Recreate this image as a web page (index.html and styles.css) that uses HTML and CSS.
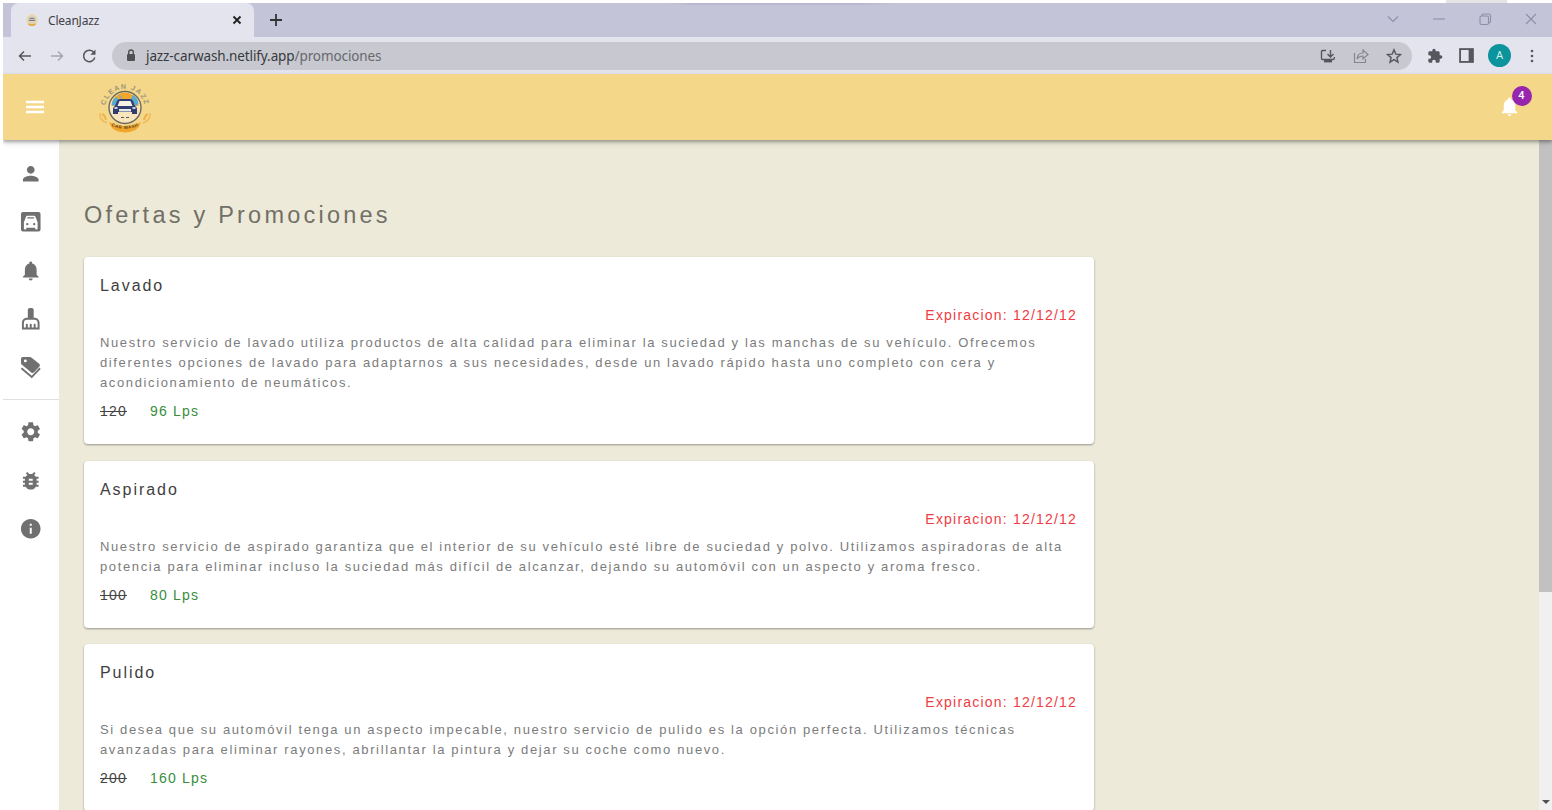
FILE: index.html
```html
<!DOCTYPE html>
<html lang="es">
<head>
<meta charset="utf-8">
<title>CleanJazz</title>
<link rel="stylesheet" href="styles.css">
</head>
<body>
<div class="window">
  <header class="tabstrip">
    <div class="tab">
      <svg class="favicon" viewBox="0 0 16 16"><circle cx="8" cy="8" r="6.5" fill="#ecd7a4"/><circle cx="8" cy="7.5" r="4.3" fill="#d9d3c2"/><path d="M5 6h6M4.5 8.5h7" stroke="#777b87" stroke-width="1.4"/><path d="M4 12.5q4 2.5 8 0" stroke="#e5a93f" stroke-width="2" fill="none"/></svg>
      <span class="tab-title">CleanJazz</span>
      <svg class="tab-close" viewBox="0 0 10 10"><path d="M1.5 1.5l7 7M8.5 1.5l-7 7" stroke="#222" stroke-width="1.9"/></svg>
    </div>
    <svg class="new-tab" viewBox="0 0 14 14"><path d="M7 1v12M1 7h12" stroke="#333" stroke-width="1.8"/></svg>
    <div class="window-buttons">
      <svg viewBox="0 0 14 14"><path d="M2 4.5l5 5 5-5"/></svg>
      <svg viewBox="0 0 14 14"><path d="M1 7h12"/></svg>
      <svg viewBox="0 0 14 14"><rect x="2" y="4" width="8.5" height="8.5" rx="1.5"/><path d="M4 4V3q0-1 1-1h5.500q2 0 2 2v5.500q0 1-1.500 1.500"/></svg>
      <svg viewBox="0 0 14 14"><path d="M2 2l10 10M12 2L2 12"/></svg>
    </div>
  </header>
  <div class="toolbar">
    <svg class="nav-icon" viewBox="0 0 16 16"><path d="M14 8H2.500M7 3.500L2.500 8 7 12.500" stroke="#55575c"/></svg>
    <svg class="nav-icon" viewBox="0 0 16 16"><path d="M2 8h11.500M9 3.500L13.500 8 9 12.500" stroke="#a5a6ae"/></svg>
    <svg class="nav-icon" viewBox="0 0 16 16"><path d="M13 4.700A5.700 5.700 0 1 0 13.800 9.500" stroke="#55575c"/><path d="M14.500 1.500v5.200H9.300z" fill="#55575c"/></svg>
    <div class="address">
      <svg class="lock" viewBox="0 0 10 13"><rect x="1" y="5" width="8" height="7" rx="1" fill="#4f5054"/><path d="M2.700 5V3.300a2.300 2.300 0 0 1 4.600 0V5" stroke="#4f5054" stroke-width="1.400" fill="none"/></svg>
      <span class="url">jazz-carwash.netlify.app<span class="path">/promociones</span></span>
      <div class="address-actions">
        <svg viewBox="0 0 16 16"><path d="M6 2.500H2.500Q1.500 2.500 1.500 3.500v7q0 1 1 1h10.500q1.300 0 1.300-1.300V9M10.500 2v6.500M7.500 6l3 3 3-3"/><path d="M4 13.200h8" stroke-width="2.400"/></svg>
        <svg class="share" viewBox="0 0 16 16"><path d="M1.500 5v9.500h11V11M4 11q.5-6 6-6V2l5 4.500-5 4.500V8q-4 0-6 3z"/></svg>
        <svg viewBox="0 0 16 16"><path d="M8 1.800l1.800 4.300 4.700.4-3.600 3.100 1.100 4.600L8 11.700l-4 2.500 1.100-4.600L1.500 6.500l4.700-.4z"/></svg>
      </div>
    </div>
    <svg class="ext" viewBox="0 0 24 24"><path d="M20.500 11H19V7c0-1.100-.9-2-2-2h-4V3.500C13 2.120 11.880 1 10.500 1S8 2.120 8 3.500V5H4c-1.100 0-2 .9-2 2v3.800h1.500c1.500 0 2.700 1.200 2.700 2.700s-1.200 2.700-2.700 2.700H2V20c0 1.100.9 2 2 2h3.800v-1.500c0-1.500 1.200-2.700 2.700-2.700s2.700 1.200 2.700 2.700V22H17c1.100 0 2-.9 2-2v-4h1.500c1.380 0 2.500-1.120 2.500-2.500S21.880 11 20.500 11z"/></svg>
    <svg class="panel" viewBox="0 0 14 14"><rect x="1" y="1" width="12" height="12" fill="none" stroke="#55575c" stroke-width="1.700"/><path d="M9 1h4v12H9z" fill="#55575c"/></svg>
    <span class="avatar">A</span>
    <svg class="dots" viewBox="0 0 4 16"><circle cx="2" cy="3" r="1.300"/><circle cx="2" cy="8" r="1.300"/><circle cx="2" cy="13" r="1.300"/></svg>
  </div>
  <div class="appbar">
    <svg class="menu" viewBox="0 0 24 24"><path d="M3 18.200h18v-2.400H3v2.400zm0-5h18v-2.400H3v2.400zm0-7.400v2.400h18V5.800H3z"/></svg>
    <svg class="logo" viewBox="0 0 56 56">
      <defs><path id="arc-top" d="M8 30A20 20 0 0 1 48 30"/><path id="arc-low" d="M14 46.500Q28 53.500 42 46.500"/></defs>
      <path d="M3 34q-1 7 7 10M53 34q1 7-7 10" fill="none" stroke="#efbc5e" stroke-width="1.500"/>
      <path d="M5 35q3 1 4 6M51 35q-3 1-4 6" fill="none" stroke="#efb24d" stroke-width="2"/>
      <path d="M12 43q3 10.500 16 10.500T44 43q-7 4-16 4t-16-4z" fill="#f2a62b"/>
      <circle cx="28" cy="28.500" r="16" fill="#f7e6bd" stroke="#6a6960" stroke-width="1.400"/>
      <path d="M14.500 27a13.500 13.500 0 0 1 27 0z" fill="#f1a62e"/>
      <path d="M14.500 26q1-6 4.500-8l3 3-4 6zM36 16q5 3 5.500 9l-3 2-5-6z" fill="#55abd0"/>
      <path d="M22 16l3 4" stroke="#6bb2bf" stroke-width="1.200"/>
      <path d="M20 22q1-2 3-2h10q2 0 3 2l2 5q2 1 2 3v5h-5v-2H21v2h-5v-5q0-2 2-3z" fill="#303d70"/>
      <path d="M22.500 22h11l2 5h-15z" fill="#f5f1e5"/><path d="M22 30h12v2.500H22z" fill="#e6e8e9"/><path d="M17.500 29h3M35.500 29h3" stroke="#fff" stroke-width="1.500"/>
      <path d="M24 38.500h3M29 38.500h3" stroke="#555" stroke-width="1.200"/>
      <text class="logo-top"><textPath href="#arc-top" startOffset="50%" text-anchor="middle">CLEAN JAZZ</textPath></text>
      <text class="logo-low"><textPath href="#arc-low" startOffset="50%" text-anchor="middle">CAR WASH</textPath></text>
    </svg>
    <div class="notify">
      <svg viewBox="0 0 24 24"><path d="M12 22c1.100 0 2-.9 2-2h-4c0 1.100.9 2 2 2zm6-6v-5c0-3.070-1.630-5.640-4.500-6.320V4c0-.83-.67-1.500-1.500-1.500s-1.500.67-1.500 1.500v.68C7.640 5.360 6 7.920 6 11v5l-2 2v1h16v-1l-2-2z"/></svg>
      <span class="badge">4</span>
    </div>
  </div>
  <div class="body">
    <nav class="sidebar">
      <svg viewBox="0 0 24 24"><path d="M12 12c2.210 0 4-1.790 4-4s-1.790-4-4-4-4 1.790-4 4 1.790 4 4 4zm0 2c-2.670 0-8 1.340-8 4v2h16v-2c0-2.660-5.330-4-8-4z"/></svg>
      <svg viewBox="0 0 24 24"><path fill-rule="evenodd" d="M4 2h16q2 0 2 2v16q0 2-2 2H4q-2 0-2-2V4q0-2 2-2zM7.400 6.500L5 12.500V19q0 1 1 1h.500q1 0 1-1v-1h9v1q0 1 1 1h.500q1 0 1-1v-6.500l-2.400-6q-.3-.7-1.200-.7H8.600q-.9 0-1.200.7zM8.500 7.300h7v1.500h-7zM8.500 13.200a1.200 1.200 0 1 1 0 2.400 1.200 1.200 0 0 1 0-2.400zm7 0a1.200 1.200 0 1 1 0 2.400 1.200 1.200 0 0 1 0-2.400z"/></svg>
      <svg viewBox="0 0 24 24"><path d="M12 22c1.100 0 2-.9 2-2h-4c0 1.100.9 2 2 2zm6-6v-5c0-3.070-1.630-5.640-4.500-6.320V4c0-.83-.67-1.500-1.500-1.500s-1.500.67-1.500 1.500v.68C7.640 5.360 6 7.920 6 11v5l-2 2v1h16v-1l-2-2z"/></svg>
      <svg viewBox="0 0 24 24"><path d="M16 11h-1V3c0-1.100-.9-2-2-2h-2c-1.100 0-2 .9-2 2v8H8c-2.760 0-5 2.240-5 5v7h18v-7c0-2.760-2.240-5-5-5zm3 10h-2v-3c0-.55-.45-1-1-1s-1 .45-1 1v3h-2v-3c0-.55-.45-1-1-1s-1 .45-1 1v3H9v-3c0-.55-.45-1-1-1s-1 .45-1 1v3H5v-5c0-1.650 1.350-3 3-3h8c1.650 0 3 1.350 3 3v5z"/></svg>
      <svg viewBox="0 0 24 24"><path fill-rule="evenodd" d="M4 1h7.200q.8 0 1.400.5l8 6.500q1.500 1.300.3 2.600l-5.500 6q-1.400 1.400-2.900.2L3 9Q2 8.300 2 7V3q0-2 2-2zm2.500 2.500a1.500 1.500 0 1 0 0 3 1.500 1.500 0 0 0 0-3z"/><path d="M2.500 12.500L13 21.500l8.500-9" fill="none" stroke="#707070" stroke-width="1.900"/></svg>
      <hr>
      <svg viewBox="0 0 24 24"><path d="M19.140 12.940c.04-.3.060-.61.060-.94s-.02-.64-.07-.94l2.030-1.580c.18-.14.23-.41.120-.61l-1.920-3.320c-.12-.22-.37-.29-.59-.22l-2.390.96c-.5-.38-1.030-.7-1.620-.94l-.36-2.540c-.04-.24-.24-.41-.48-.41h-3.840c-.24 0-.43.170-.47.410l-.36 2.540c-.59.240-1.130.570-1.620.940l-2.390-.96c-.22-.08-.47 0-.59.220L2.740 8.870c-.12.210-.08.470.12.610l2.030 1.580c-.05.300-.09.630-.09.940s.02.640.07.940l-2.030 1.580c-.18.140-.23.410-.12.610l1.920 3.320c.12.220.37.290.59.220l2.390-.96c.5.380 1.030.7 1.620.94l.36 2.540c.05.240.24.410.48.410h3.840c.24 0 .44-.17.470-.41l.36-2.540c.59-.24 1.130-.56 1.620-.94l2.390.96c.22.080.47 0 .59-.22l1.920-3.320c.12-.22.070-.47-.12-.61l-2.010-1.580zM12 15.600c-1.980 0-3.600-1.620-3.600-3.600s1.620-3.600 3.600-3.600 3.600 1.620 3.600 3.600-1.620 3.600-3.600 3.600z"/></svg>
      <svg viewBox="0 0 24 24"><path d="M20 8h-2.810c-.45-.78-1.070-1.450-1.820-1.960L17 4.410 15.590 3l-2.170 2.170C12.960 5.060 12.490 5 12 5s-.96.060-1.410.17L8.410 3 7 4.410l1.620 1.630C7.880 6.550 7.260 7.220 6.810 8H4v2h2.090c-.05.330-.09.660-.09 1v1H4v2h2v1c0 .34.040.67.090 1H4v2h2.810c1.040 1.790 2.970 3 5.190 3s4.150-1.210 5.190-3H20v-2h-2.090c.05-.33.090-.66.090-1v-1h2v-2h-2v-1c0-.34-.04-.67-.09-1H20V8zm-6 8h-4v-2h4v2zm0-4h-4v-2h4v2z"/></svg>
      <svg viewBox="0 0 24 24"><path d="M12 2C6.480 2 2 6.480 2 12s4.480 10 10 10 10-4.480 10-10S17.520 2 12 2zm1 15h-2v-6h2v6zm0-8h-2V7h2v2z"/></svg>
    </nav>
    <main class="content">
      <h1>Ofertas y Promociones</h1>
      <div class="cards">
        <article class="card">
          <h2>Lavado</h2>
          <p class="expires">Expiracion: 12/12/12</p>
          <p class="desc">Nuestro servicio de lavado utiliza productos de alta calidad para eliminar la suciedad y las manchas de su vehículo. Ofrecemos<br>diferentes opciones de lavado para adaptarnos a sus necesidades, desde un lavado rápido hasta uno completo con cera y<br>acondicionamiento de neumáticos.</p>
          <p class="prices"><s>120</s><span class="offer">96 Lps</span></p>
        </article>
        <article class="card">
          <h2>Aspirado</h2>
          <p class="expires">Expiracion: 12/12/12</p>
          <p class="desc">Nuestro servicio de aspirado garantiza que el interior de su vehículo esté libre de suciedad y polvo. Utilizamos aspiradoras de alta<br>potencia para eliminar incluso la suciedad más difícil de alcanzar, dejando su automóvil con un aspecto y aroma fresco.</p>
          <p class="prices"><s>100</s><span class="offer">80 Lps</span></p>
        </article>
        <article class="card">
          <h2>Pulido</h2>
          <p class="expires">Expiracion: 12/12/12</p>
          <p class="desc">Si desea que su automóvil tenga un aspecto impecable, nuestro servicio de pulido es la opción perfecta. Utilizamos técnicas<br>avanzadas para eliminar rayones, abrillantar la pintura y dejar su coche como nuevo.</p>
          <p class="prices"><s>200</s><span class="offer">160 Lps</span></p>
        </article>
      </div>
    </main>
    <div class="scrollbar"><div class="thumb"></div><div class="down"></div></div>
  </div>
</div>
</body>
</html>
```
FILE: styles.css
```css
* { box-sizing: border-box; }
body { margin: 0; height: 810px; overflow: hidden; background: linear-gradient(90deg, #fff 1446px, #e4e4e4 1446px 1507px, #fff 1507px) 0 0 / 100% 3px no-repeat #fff; font-family: "Liberation Sans", Arial, sans-serif; }
h1, h2, p { margin: 0; font-weight: 400; }
svg { display: block; flex: none; }
.window { height: 807px; margin: 3px 0 0 3px; display: flex; flex-direction: column; overflow: hidden; }
.tabstrip { flex: none; height: 34px; display: flex; align-items: center; background: linear-gradient(90deg, transparent 665px, #b8b9d0 690px 860px, transparent 895px) 0 0 / 100% 2px no-repeat #c4c4d9; }
.tab { width: 243px; height: 34px; margin-left: 8px; padding: 0 10px 0 14px; display: flex; align-items: center; border-radius: 8px 8px 0 0; background: #e3e4ee; }
.favicon { width: 14px; height: 14px; }
.tab-title { margin-left: 9px; flex: 1; font: 12px "Noto Sans", sans-serif; letter-spacing: -.2px; color: #3f4147; }
.tab-close { width: 10px; height: 10px; margin-right: 2px; }
.new-tab { width: 14px; height: 14px; margin-left: 15px; }
.window-buttons { margin: -3px 14px 0 auto; display: flex; gap: 32px; }
.window-buttons svg { width: 14px; height: 14px; fill: none; stroke: #8e8ea4; stroke-width: 1.1; }
.toolbar { flex: none; height: 37px; padding-left: 14px; display: flex; align-items: center; background: #e3e4ee; }
.nav-icon { width: 16px; height: 16px; margin-right: 16px; fill: none; stroke-width: 1.5; }
.nav-icon:nth-child(3) { margin-right: 15px; }
.address { width: 1300px; height: 28px; padding: 0 10px 0 14px; display: flex; align-items: center; border-radius: 14px; background: #c8c9d0; }
.lock { width: 10px; height: 13px; }
.url { margin-left: 10px; font: 13.5px "Noto Sans", sans-serif; letter-spacing: -.1px; color: #37393e; }
.path { color: #66686e; }
.address-actions { margin-left: auto; display: flex; gap: 17px; }
.address-actions svg { width: 16px; height: 16px; fill: none; stroke: #55575c; stroke-width: 1.4; }
.address-actions .share { stroke: #85878d; stroke-width: 1.2; }
.ext { width: 16px; height: 16px; margin-left: 15px; fill: #55575c; }
.panel { width: 15px; height: 15px; margin-left: 16px; }
.avatar { width: 23px; height: 23px; margin-left: 14px; border-radius: 50%; background: #0b949b; color: #d8f2f2; font: 11px/23px Roboto, sans-serif; text-align: center; }
.dots { width: 4px; height: 16px; margin-left: 19px; fill: #55575c; }
.appbar { position: relative; z-index: 1; flex: none; height: 66px; display: flex; align-items: center; padding: 0 22px 0 20px; background: #f4d788; box-shadow: 0 2px 3px rgba(0,0,0,.28), 0 3px 6px rgba(0,0,0,.12); }
.menu { width: 24px; height: 24px; fill: #fff; }
.logo { width: 56px; height: 56px; margin: -1px 0 0 50px; }
.logo-top { font: bold 7px "Liberation Sans", sans-serif; letter-spacing: 1.2px; fill: #9c967a; }
.logo-low { font: bold 4.5px "Liberation Sans", sans-serif; letter-spacing: .5px; fill: #674920; }
.notify { position: relative; margin-left: auto; width: 40px; height: 24px; }
.notify svg { width: 23px; height: 23px; margin-left: 8px; fill: #fff; }
.badge { position: absolute; left: 21.500px; top: -9px; width: 20px; height: 20px; border-radius: 50%; background: #9726ae; color: #fff; font: 500 11px/20px Roboto, sans-serif; text-align: center; }
.body { flex: 1; min-height: 0; display: flex; background: #edead9; }
.sidebar { width: 56px; flex: none; padding-top: 21.500px; display: flex; flex-direction: column; align-items: center; gap: 25px; background: #fff; }
.sidebar svg { width: 23.500px; height: 23.500px; fill: #707070; }
.sidebar hr { width: 100%; height: 1px; margin: -5px 0 -5px; border: 0; background: #dfdfdf; flex: none; }
.content { flex: 1; min-width: 0; padding: 61px 0 0 25px; overflow: hidden; }
h1 { font-size: 23.5px; line-height: 28px; letter-spacing: 3.23px; color: #716f67; }
.cards { width: 1010px; margin-top: 28px; display: flex; flex-direction: column; gap: 16.500px; }
.card { padding: 17px 17px 23px 16px; border-radius: 4px; background: #fff; box-shadow: 0 1px 2px rgba(0,0,0,.3), 0 1px 3px rgba(0,0,0,.08); white-space: nowrap; }
.card h2 { font-size: 16px; line-height: 24px; letter-spacing: 1.95px; color: #3e3e3e; }
.expires { margin-top: 7px; font-size: 14px; line-height: 20px; letter-spacing: 1.2px; text-align: right; color: #ef3c43; }
.desc { margin-top: 8px; font-size: 13px; line-height: 20px; letter-spacing: 1.628px; color: #7c7c7c; }
.prices { margin-top: 8px; display: flex; gap: 23px; font-size: 14px; line-height: 20px; letter-spacing: 1.2px; color: #444; }
.offer { color: #388e3c; }
.scrollbar { width: 13px; flex: none; display: flex; flex-direction: column; background: #f0f0f0; }
.thumb { height: 452px; background: #c1c1c1; }
.down { margin: auto auto 6px 3px; border: 4px solid transparent; border-top-color: #505050; border-bottom: 0; }
```
